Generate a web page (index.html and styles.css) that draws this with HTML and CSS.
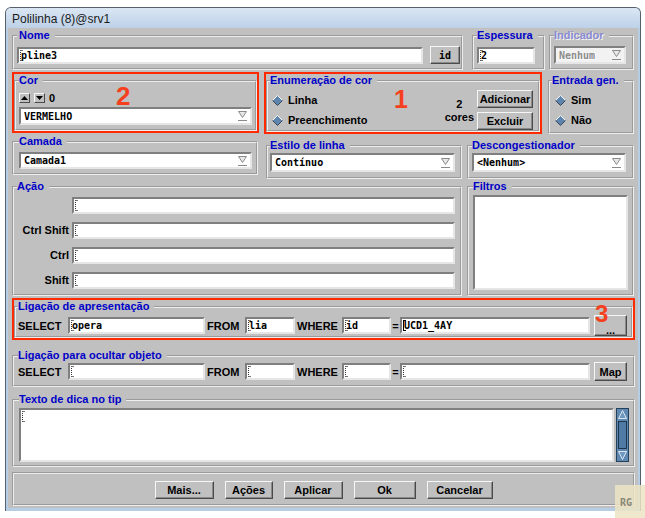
FILE: index.html
```html
<!DOCTYPE html>
<html><head><meta charset="utf-8"><title>Polilinha</title><link rel="stylesheet" href="styles.css"></head>
<body>
<div class="window">
  <div class="titlebar">Polilinha (8)@srv1</div>
  <div class="client">
    <div class="row row-a">
      <fieldset class="grp g-nome">
        <legend>Nome</legend>
        <div class="hbox">
          <div class="field f-nome"><span class="caret"></span><span>pline3</span></div>
          <button class="btn b-id">id</button>
        </div>
      </fieldset>
      <fieldset class="grp g-esp">
        <legend>Espessura</legend>
        <div class="field f-esp"><span class="caret"></span><span>2</span></div>
      </fieldset>
      <fieldset class="grp g-ind dis">
        <legend>Indicador</legend>
        <div class="field combo c-ind dis"><span>Nenhum</span><svg class="carr" width="9" height="10" viewBox="0 0 9 10"><path d="M0.5 0.5H8.5L4.5 6.5Z" fill="#e8e8e8" stroke="#8a8a8a"/><path d="M0 9.5H9" stroke="#8a8a8a"/></svg></div>
      </fieldset>
    </div>

    <div class="row row-b">
      <fieldset class="grp g-cor hl">
        <legend>Cor</legend>
        <div class="spin-row">
          <span class="spin"><svg width="7" height="4" viewBox="0 0 7 4"><path d="M3.5 0L7 4H0Z"/></svg></span>
          <span class="spin"><svg width="7" height="4" viewBox="0 0 7 4"><path d="M0 0H7L3.5 4Z"/></svg></span>
          <span class="spin-val">0</span>
        </div>
        <div class="field combo c-cor"><span>VERMELHO</span><svg class="carr" width="9" height="10" viewBox="0 0 9 10"><path d="M0.5 0.5H8.5L4.5 6.5Z" fill="#e8e8e8" stroke="#8a8a8a"/><path d="M0 9.5H9" stroke="#8a8a8a"/></svg></div>
      </fieldset>
      <fieldset class="grp g-enum hl">
        <legend>Enumeração de cor</legend>
        <div class="enum-body">
          <div class="radios">
            <div class="radio"><svg class="dia" width="11" height="11" viewBox="0 0 11 11"><path d="M5.5 0.5L10.5 5.5L5.5 10.5L0.5 5.5Z" fill="#5d85ae"/><path d="M0.5 5.5L5.5 0.5L10.5 5.5" fill="none" stroke="#f6f6f6"/><path d="M0.5 5.5L5.5 10.5L10.5 5.5" fill="none" stroke="#3d4654"/></svg><span>Linha</span></div>
            <div class="radio"><svg class="dia" width="11" height="11" viewBox="0 0 11 11"><path d="M5.5 0.5L10.5 5.5L5.5 10.5L0.5 5.5Z" fill="#5d85ae"/><path d="M0.5 5.5L5.5 0.5L10.5 5.5" fill="none" stroke="#f6f6f6"/><path d="M0.5 5.5L5.5 10.5L10.5 5.5" fill="none" stroke="#3d4654"/></svg><span>Preenchimento</span></div>
          </div>
          <div class="count">2<br>cores</div>
          <div class="btncol">
            <button class="btn b-wide">Adicionar</button>
            <button class="btn b-wide">Excluir</button>
          </div>
        </div>
      </fieldset>
      <fieldset class="grp g-ent">
        <legend>Entrada gen.</legend>
        <div class="radios">
          <div class="radio"><svg class="dia" width="11" height="11" viewBox="0 0 11 11"><path d="M5.5 0.5L10.5 5.5L5.5 10.5L0.5 5.5Z" fill="#5d85ae"/><path d="M0.5 5.5L5.5 0.5L10.5 5.5" fill="none" stroke="#f6f6f6"/><path d="M0.5 5.5L5.5 10.5L10.5 5.5" fill="none" stroke="#3d4654"/></svg><span>Sim</span></div>
          <div class="radio"><svg class="dia" width="11" height="11" viewBox="0 0 11 11"><path d="M5.5 0.5L10.5 5.5L5.5 10.5L0.5 5.5Z" fill="#5d85ae"/><path d="M0.5 5.5L5.5 0.5L10.5 5.5" fill="none" stroke="#f6f6f6"/><path d="M0.5 5.5L5.5 10.5L10.5 5.5" fill="none" stroke="#3d4654"/></svg><span>Não</span></div>
        </div>
      </fieldset>
    </div>

    <div class="row row-c">
      <fieldset class="grp g-cam">
        <legend>Camada</legend>
        <div class="field combo"><span>Camada1</span><svg class="carr" width="9" height="10" viewBox="0 0 9 10"><path d="M0.5 0.5H8.5L4.5 6.5Z" fill="#e8e8e8" stroke="#8a8a8a"/><path d="M0 9.5H9" stroke="#8a8a8a"/></svg></div>
      </fieldset>
      <fieldset class="grp g-est">
        <legend>Estilo de linha</legend>
        <div class="field combo"><span>Contínuo</span><svg class="carr" width="9" height="10" viewBox="0 0 9 10"><path d="M0.5 0.5H8.5L4.5 6.5Z" fill="#e8e8e8" stroke="#8a8a8a"/><path d="M0 9.5H9" stroke="#8a8a8a"/></svg></div>
      </fieldset>
      <fieldset class="grp g-des">
        <legend>Descongestionador</legend>
        <div class="field combo"><span>&lt;Nenhum&gt;</span><svg class="carr" width="9" height="10" viewBox="0 0 9 10"><path d="M0.5 0.5H8.5L4.5 6.5Z" fill="#e8e8e8" stroke="#8a8a8a"/><path d="M0 9.5H9" stroke="#8a8a8a"/></svg></div>
      </fieldset>
    </div>

    <div class="row row-d">
      <fieldset class="grp g-acao">
        <legend>Ação</legend>
        <div class="acao-grid">
          <span class="lbl"></span><div class="field"><span class="caret"></span></div>
          <span class="lbl">Ctrl Shift</span><div class="field"><span class="caret"></span></div>
          <span class="lbl">Ctrl</span><div class="field"><span class="caret"></span></div>
          <span class="lbl">Shift</span><div class="field"><span class="caret"></span></div>
        </div>
      </fieldset>
      <fieldset class="grp g-fil">
        <legend>Filtros</legend>
        <div class="fil-box"></div>
      </fieldset>
    </div>

    <fieldset class="grp g-ap hl">
      <legend>Ligação de apresentação</legend>
      <div class="sql">
        <span class="kw k-sel">SELECT</span>
        <div class="field s1"><span class="caret"></span><span>opera</span></div>
        <span class="kw k-from">FROM</span>
        <div class="field s2"><span class="caret"></span><span>lia</span></div>
        <span class="kw k-where">WHERE</span>
        <div class="field s3"><span class="caret"></span><span>id</span></div>
        <span class="kw k-eq">=</span>
        <div class="field s4"><span class="caret dark"></span><span>UCD1_4AY</span></div>
        <button class="btn b-sq b-dots">...</button>
      </div>
    </fieldset>

    <fieldset class="grp g-oc">
      <legend>Ligação para ocultar objeto</legend>
      <div class="sql sql-oc">
        <span class="kw k-sel">SELECT</span>
        <div class="field s1"><span class="caret"></span></div>
        <span class="kw k-from">FROM</span>
        <div class="field s2"><span class="caret"></span></div>
        <span class="kw k-where">WHERE</span>
        <div class="field s3"><span class="caret"></span></div>
        <span class="kw k-eq">=</span>
        <div class="field s4"><span class="caret"></span></div>
        <button class="btn b-sq b-map">Map</button>
      </div>
    </fieldset>

    <fieldset class="grp g-tip">
      <legend>Texto de dica no tip</legend>
      <div class="tip-body">
        <div class="field tip-area"><span class="caret"></span></div>
        <svg class="scroll" width="13" height="54" viewBox="0 0 13 54">
          <rect x="0" y="0" width="13" height="54" fill="#5f88b0"/>
          <rect x="0.5" y="0.5" width="12" height="53" fill="none" stroke="#23405c"/>
          <path d="M6.5 2.5L10.5 10.5H2.5Z" fill="#6f98c0" stroke="#d8e6f2"/>
          <rect x="2.5" y="13.5" width="8" height="27" fill="#4f7aa3" stroke="#1d3650"/>
          <path d="M2.5 43.5H10.5L6.5 51.5Z" fill="#6f98c0" stroke="#d8e6f2"/>
        </svg>
      </div>
    </fieldset>

    <div class="btnbar">
      <button class="btn bb b1">Mais...</button>
      <button class="btn bb b2">Ações</button>
      <button class="btn bb b3">Aplicar</button>
      <button class="btn bb b4">Ok</button>
      <button class="btn bb b5">Cancelar</button>
    </div>

    <span class="mark m2">2</span>
    <span class="mark m1">1</span>
    <span class="mark m3">3</span>
  </div>
</div>
<div class="rg">RG</div>
</body></html>
```

FILE: styles.css
```css
* { box-sizing: border-box; }
html, body { margin: 0; padding: 0; background: #fff; }
body {
  position: relative;
  width: 645px; height: 518px; overflow: hidden;
  font-family: "Liberation Sans", Arial, sans-serif;
  font-size: 11px; font-weight: bold; color: #000;
}
.window {
  margin: 7px 0 0 5px;
  width: 636px; height: 504px;
  border: 1px solid #56606c; border-bottom: 0;
  border-radius: 6px 6px 0 0;
  background: #b6cde6;
  padding: 0 2px 3px;
  display: flex; flex-direction: column;
}
.titlebar {
  height: 20px; margin: 0 -2px; padding-left: 6px;
  background: linear-gradient(#dae6f3, #bdd1e8);
  border-radius: 5px 5px 0 0;
  font-weight: normal; font-size: 12px; line-height: 22px; color: #1a1a1a;
}
.client {
  position: relative;
  height: 480px;
  background: #c0c0c0;
  padding: 1px 3px 0 4px;
}
.row { display: flex; align-items: flex-start; }

.grp { margin: 0; min-width: 0; border: 2px groove #eeeeee; padding: 0 3px; }
.grp > legend { padding: 0 5px 0 2px; color: #0000c8; font-size: 11px; line-height: 13px; }
.hl { outline: 2px solid #ff2a00; }

.field {
  height: 17px; background: #fff;
  border: 2px solid; border-color: #7f7f7f #e6e6e6 #e6e6e6 #7f7f7f;
  display: flex; align-items: center; padding: 0 1px;
  font-family: "DejaVu Sans Mono", "Liberation Mono", monospace;
  font-size: 10px; font-weight: bold; white-space: nowrap; overflow: hidden;
}
.caret {
  flex: none; width: 3px; height: 11px; margin-right: -2px;
  border-left: 1px dotted #333; border-top: 1px solid #777; border-bottom: 1px solid #777;
}
.caret.dark { border-left: 1px solid #000; border-top-color: #000; border-bottom-color: #000; }
.combo { justify-content: space-between; padding-left: 3px; padding-right: 3px; }
.carr { flex: none; }

.btn {
  font-family: "Liberation Sans", Arial, sans-serif; font-size: 11px; font-weight: bold; color: #000;
  background: #c0c0c0; margin: 0; padding: 0;
  border: 1px solid; border-color: #f6f6f6 #4a4a4a #4a4a4a #f6f6f6;
  box-shadow: inset -1px -1px 0 #8a8a8a;
}

/* row A */
.g-nome { width: 451px; height: 41px; padding: 4px 1px 0 3px; }
.hbox { display: flex; align-items: flex-start; }
.f-nome { flex: 1; margin: 1px 7px 0 0; }
.b-id { width: 30px; height: 18px; font-family: "DejaVu Sans Mono", monospace; font-size: 10px; }
.g-esp { width: 73px; height: 41px; margin-left: 9px; padding: 5px 3px 0 3px; }
.g-esp > legend { padding-left: 0; }
.f-esp { width: 58px; }
.g-ind { width: 85px; height: 41px; margin-left: 4px; padding: 4px 3px 0 3px; }
.g-ind > legend { padding-left: 0; color: #8a8ad0; text-shadow: 1px 1px 0 #f4f4f4; }
.c-ind { width: 72px; height: 18px; background: #f2f2f2; color: #8c8c8c; text-shadow: 1px 1px 0 #fff; }

/* row B */
.row-b { margin-top: 4px; }
.g-cor { width: 243px; height: 57px; margin-left: 2px; padding: 5px 3px 0; }
.g-cor > legend { padding-left: 0; }
.spin-row { display: flex; align-items: center; height: 11px; gap: 4px; }
.spin {
  width: 11px; height: 10px; display: flex; align-items: center; justify-content: center;
  background: #c0c0c0; border: 1px solid; border-color: #f6f6f6 #4a4a4a #4a4a4a #f6f6f6;
}
.spin-val { font-size: 11px; }
.c-cor { margin-top: 4px; height: 18px; }
.g-enum { width: 274px; height: 58px; margin-left: 9px; padding: 3px 5px 0 4px; }
.g-enum > legend { padding-left: 0; margin-left: -2px; }
.enum-body { display: flex; align-items: flex-start; }
.radios { flex: 1; display: flex; flex-direction: column; }
.radio { height: 20px; display: flex; align-items: center; gap: 5px; }
.count { margin: 8px 3px 0 0; text-align: center; line-height: 13px; font-size: 11px; }
.btncol { display: flex; flex-direction: column; gap: 4px; }
.b-wide { width: 56px; height: 18px; }
.g-ent { width: 86px; height: 60px; margin-left: 8px; padding: 3px 3px 0 2px; }
.g-ent > legend { padding-left: 0; }
.g-ent .radio { padding-left: 3px; }

/* row C */
.row-c { margin-top: 1px; }
.g-cam { width: 246px; height: 40px; padding: 4px 4px 0 5px; }
.g-cam > legend { padding-left: 0; }
.g-cam .combo { height: 17px; }
.g-est { width: 196px; height: 40px; margin: 4px 0 0 8px; padding: 1px 5px 0 2px; }
.g-des { width: 167px; height: 40px; margin: 4px 0 0 5px; padding: 1px 6px 0 3px; }
.g-des > legend, .g-est > legend { padding-left: 0; }
.g-est .combo, .g-des .combo { height: 19px; }

/* row D */
.row-d { margin-top: 1px; }
.g-acao { width: 450px; height: 116px; padding: 4px 5px 0 3px; }
.g-acao > legend { padding-left: 0; }
.acao-grid { display: grid; grid-template-columns: 52px 1fr; column-gap: 3px; row-gap: 8px; }
.acao-grid .lbl { text-align: right; line-height: 17px; }
.g-fil { width: 167px; height: 116px; margin-left: 5px; padding: 2px 4px 0 4px; }
.g-fil > legend { padding-left: 0; }
.fil-box {
  height: 95px; background: #fff;
  border: 2px solid; border-color: #7f7f7f #e6e6e6 #e6e6e6 #7f7f7f;
}

/* SQL rows */
.g-ap { margin: 4px 2px 0; height: 38px; padding: 2px 3px 0 2px; }
.g-ap > legend { padding-left: 0; }
.g-oc { margin-top: 11px; height: 38px; padding: 0 3px 0 4px; }
.g-oc > legend { padding-left: 0; }
.sql { display: flex; align-items: center; height: 21px; }
.sql-oc { height: 19px; }
.kw { flex: none; }
.k-sel { width: 50px; }
.s1 { width: 137px; }
.k-from { width: 38px; margin-left: 2px; }
.s2 { width: 50px; }
.k-where { width: 45px; margin-left: 2px; }
.s3 { width: 49px; }
.k-eq { width: 9px; text-align: center; }
.s4 { width: 190px; }
.b-sq { width: 33px; margin-left: 4px; }
.b-dots { height: 21px; padding-top: 8px; line-height: 10px; vertical-align: top; }
.b-map { height: 19px; }

/* tip */
.g-tip { margin-top: 6px; height: 74px; padding: 2px 4px 0 5px; }
.g-tip > legend { padding-left: 0; }
.tip-body { display: flex; gap: 2px; }
.tip-area { flex: 1; height: 54px; align-items: flex-start; padding-top: 1px; }
.scroll { flex: none; display: block; }

/* buttons */
.btnbar {
  margin-top: 5px; height: 34px;
  border: 2px groove #eeeeee;
  display: flex; justify-content: center; align-items: flex-start;
  gap: 11px; padding-top: 7px;
}
.bb { height: 18px; }
.b1 { width: 59px; }
.b2 { width: 48px; }
.b3 { width: 59px; }
.b4 { width: 62px; }
.b5 { width: 66px; }

/* annotations */
.mark {
  position: absolute; color: #f4401e;
  font-family: "Liberation Sans", Arial, sans-serif; font-weight: bold;
  font-size: 26px; line-height: 26px;
}
.m2 { left: 108px; top: 55px; }
.m1 { left: 386px; top: 59px; font-size: 25px; line-height: 25px; }
.m3 { left: 587px; top: 279px; font-size: 24px; line-height: 14px; }

.rg {
  position: absolute; left: 615px; top: 485px; width: 30px; height: 33px;
  background: rgba(236, 228, 196, 0.85);
  color: #8a8878; font-family: "DejaVu Sans Mono", monospace; font-size: 10px; font-weight: bold;
  padding: 12px 0 0 5px;
}
```
